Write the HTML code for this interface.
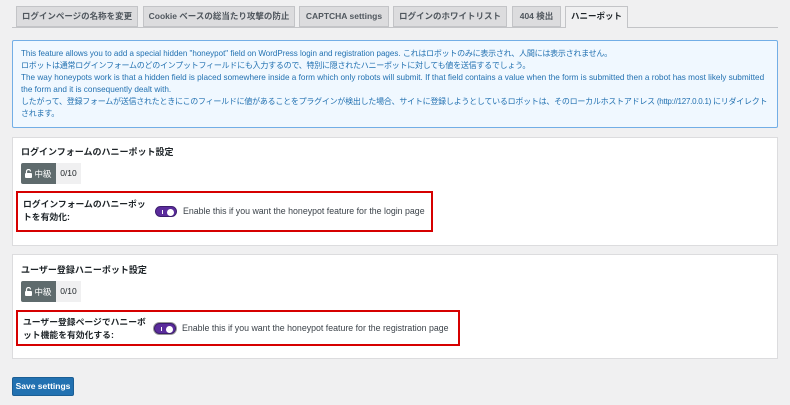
<!DOCTYPE html>
<html><head><meta charset="utf-8"><style>
*{margin:0;padding:0;box-sizing:border-box}
body{width:790px;height:405px;background:#f0f0f1;font-family:"Liberation Sans","Noto Sans CJK JP",sans-serif;position:relative;overflow:hidden;color:#1d2327}
.tab{position:absolute;top:6px;height:21px;background:#dcdcde;border:1px solid #c3c4c7;font-size:8.5px;font-weight:bold;color:#50575e;line-height:19px;text-align:center}
.line{position:absolute;left:12px;top:27px;width:766px;height:1px;background:#c3c4c7}
.info{position:absolute;left:12px;top:40px;width:766px;height:88px;background:#f0f8ff;border:1px solid #72aee6;border-radius:2px;padding:7px 8px;font-size:8.2px;line-height:12px;color:#2271b1;white-space:nowrap;overflow:hidden}
.info .j{font-size:8px;letter-spacing:-0.25px}
.panel{position:absolute;left:12px;width:766px;background:#fff;border:1px solid #dcdcde}
.title{position:absolute;left:8px;font-size:9px;font-weight:bold}
.badge{position:absolute;left:8px;height:21px;display:flex;font-size:8.5px}
.badge .a{background:#5f6b6d;color:#fff;width:35px;display:flex;align-items:center;justify-content:center;gap:2px;border-radius:2px 0 0 2px}
.badge .b{background:#f0f0f1;width:25px;line-height:21px;text-align:center}
.red{position:absolute;left:3px;border:2px solid #d60000}
.lbl{position:absolute;left:5px;font-size:8.8px;font-weight:bold;line-height:13px}
.tog{position:absolute;width:22px;height:11px;border-radius:6px;background:#5b2c9c;border:1px solid #3c1d6e}
.tog:after{content:"";position:absolute;right:2px;top:1.5px;width:7px;height:7px;border-radius:50%;background:#fff}
.tog:before{content:"";position:absolute;left:6px;top:3px;width:1px;height:4px;background:#fff}
.desc{position:absolute;font-size:8.8px;color:#3c434a}
.btn{position:absolute;left:12px;top:377px;width:62px;height:19px;background:#2271b1;border:1px solid #1b5e95;border-radius:2px;color:#fff;font-size:8.5px;font-weight:bold;line-height:17px;text-align:center}
</style></head><body>
<div class="line"></div>
<div class="tab" style="left:16px;width:122px">ログインページの名称を変更</div>
<div class="tab" style="left:143px;width:152px">Cookie ベースの総当たり攻撃の防止</div>
<div class="tab" style="left:299px;width:90px">CAPTCHA settings</div>
<div class="tab" style="left:393px;width:114px">ログインのホワイトリスト</div>
<div class="tab" style="left:512px;width:49px">404 検出</div>
<div class="tab" style="left:565px;width:63px;height:22px;background:#f0f0f1;border-bottom:none;color:#1d2327">ハニーポット</div>
<div class="info"><span style="font-size:8px">This feature allows you to add a special hidden "honeypot" field on WordPress login and registration pages.</span> <span class="j">これはロボットのみに表示され、人間には表示されません。</span><br><span class="j">ロボットは通常ログインフォームのどのインプットフィールドにも入力するので、特別に隠されたハニーポットに対しても値を送信するでしょう。</span><br>The way honeypots work is that a hidden field is placed somewhere inside a form which only robots will submit. If that field contains a value when the form is submitted then a robot has most likely submitted<br>the form and it is consequently dealt with.<br><span class="j">したがって、登録フォームが送信されたときにこのフィールドに値があることをプラグインが検出した場合、サイトに登録しようとしているロボットは、そのローカルホストアドレス (http://127.0.0.1) にリダイレクト</span><br><span class="j">されます。</span></div>

<div class="panel" style="top:137px;height:109px">
<div class="title" style="top:7px">ログインフォームのハニーポット設定</div>
<div class="badge" style="top:25px"><div class="a"><svg width="7" height="9" viewBox="0 0 7 9"><path d="M1.5 4V2.5a2 2 0 0 1 4 0" fill="none" stroke="#fff" stroke-width="1.2"/><rect x="0" y="4" width="7" height="5" rx="1" fill="#fff"/></svg>中級</div><div class="b">0/10</div></div>
<div class="red" style="top:53px;width:417px;height:41px">
<div class="lbl" style="top:5px">ログインフォームのハニーポッ<br>トを有効化:</div>
<div class="tog" style="left:137px;top:13px"></div>
<div class="desc" style="left:165px;top:13px">Enable this if you want the honeypot feature for the login page</div>
</div></div>

<div class="panel" style="top:254px;height:105px">
<div class="title" style="top:8px">ユーザー登録ハニーポット設定</div>
<div class="badge" style="top:26px"><div class="a"><svg width="7" height="9" viewBox="0 0 7 9"><path d="M1.5 4V2.5a2 2 0 0 1 4 0" fill="none" stroke="#fff" stroke-width="1.2"/><rect x="0" y="4" width="7" height="5" rx="1" fill="#fff"/></svg>中級</div><div class="b">0/10</div></div>
<div class="red" style="top:55px;width:444px;height:36px">
<div class="lbl" style="top:4px">ユーザー登録ページでハニーボ<br>ット機能を有効化する:</div>
<div class="tog" style="left:136px;top:11px;box-shadow:0 0 0 1px #999"></div>
<div class="desc" style="left:164px;top:11px">Enable this if you want the honeypot feature for the registration page</div>
</div></div>

<div class="btn">Save settings</div>
</body></html>
